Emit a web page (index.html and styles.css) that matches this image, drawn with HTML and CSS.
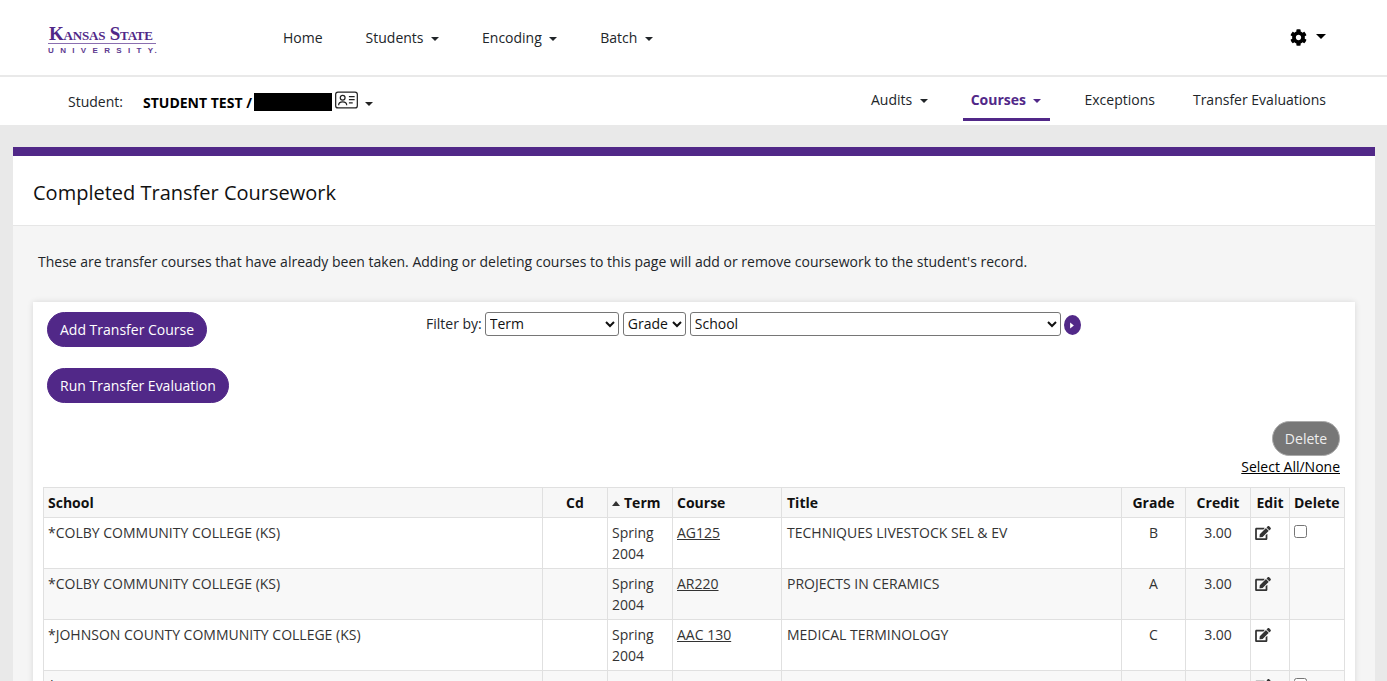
FILE: index.html
```html
<!DOCTYPE html>
<html lang="en">
<head>
<meta charset="utf-8">
<title>Completed Transfer Coursework</title>
<link rel="stylesheet" href="styles.css">
</head>
<body>
<svg class="defs" width="0" height="0" aria-hidden="true">
  <symbol id="edit" viewBox="0 0 576 512"><path d="M402.6 83.2l90.2 90.2c3.8 3.8 3.8 10 0 13.8L274.4 405.6l-92.8 10.3c-12.4 1.4-22.9-9.1-21.5-21.5l10.3-92.8L388.8 83.2c3.8-3.8 10-3.8 13.8 0zm162-22.9l-48.8-48.8c-15.2-15.2-39.9-15.2-55.2 0l-35.4 35.4c-3.8 3.8-3.8 10 0 13.8l90.2 90.2c3.8 3.8 10 3.8 13.8 0l35.4-35.4c15.2-15.3 15.2-40 0-55.2zM384 346.2V448H64V128h229.8c3.2 0 6.2-1.3 8.5-3.5l40-40c7.6-7.6 2.2-20.5-8.5-20.5H48C21.5 64 0 85.5 0 112v352c0 26.5 21.5 48 48 48h352c26.5 0 48-21.5 48-48V306.2c0-10.7-12.9-16-20.5-8.5l-40 40c-2.2 2.3-3.5 5.3-3.5 8.5z"/></symbol>
</svg>
<header class="topbar">
  <div class="logo">
    <div class="logo-name">Kansas State</div>
    <div class="logo-sub">UNIVERSITY<span class="logo-tm">.</span></div>
  </div>
  <nav class="mainnav">
    <a class="navlink">Home</a>
    <a class="navlink caret">Students</a>
    <a class="navlink caret">Encoding</a>
    <a class="navlink caret">Batch</a>
  </nav>
  <div class="settings">
    <svg class="gear" viewBox="0 0 512 512"><path d="M487.4 315.7l-42.6-24.6c4.3-23.2 4.3-47 0-70.2l42.6-24.6c4.9-2.8 7.1-8.6 5.5-14-11.1-35.6-30-67.8-54.7-94.6-3.8-4.1-10-5.1-14.8-2.3L380.8 110c-17.9-15.4-38.5-27.3-60.8-35.1V25.8c0-5.6-3.9-10.5-9.4-11.7-36.7-8.2-74.3-7.8-109.2 0-5.5 1.2-9.4 6.1-9.4 11.7V75c-22.2 7.9-42.8 19.8-60.8 35.1L88.7 85.5c-4.9-2.8-11-1.9-14.8 2.3-24.7 26.7-43.6 58.9-54.7 94.6-1.7 5.4.6 11.2 5.5 14L67.3 221c-4.3 23.2-4.3 47 0 70.2l-42.6 24.6c-4.9 2.8-7.1 8.6-5.5 14 11.1 35.6 30 67.8 54.7 94.6 3.8 4.1 10 5.1 14.8 2.3l42.6-24.6c17.9 15.4 38.5 27.3 60.8 35.1v49.2c0 5.6 3.9 10.5 9.4 11.7 36.7 8.2 74.3 7.8 109.2 0 5.5-1.2 9.4-6.1 9.4-11.7v-49.2c22.2-7.9 42.8-19.8 60.8-35.1l42.6 24.6c4.9 2.8 11 1.9 14.8-2.3 24.7-26.7 43.6-58.9 54.7-94.6 1.5-5.5-.7-11.3-5.6-14.1zM256 336c-44.1 0-80-35.9-80-80s35.9-80 80-80 80 35.9 80 80-35.9 80-80 80z"/></svg>
    <span class="caret-only"></span>
  </div>
</header>
<div class="subbar">
  <div class="student">
    <span class="student-label">Student:</span>
    <strong class="student-name">STUDENT TEST /</strong>
    <span class="redacted"></span>
    <svg class="idcard" viewBox="0 0 24 18"><rect x="0.7" y="0.7" width="22.6" height="16.6" rx="2.4" fill="none" stroke="#222" stroke-width="1.3"/><circle cx="8" cy="6.6" r="2.5" fill="none" stroke="#222" stroke-width="1.3"/><path d="M3.8 14.6c0-4.8 8.4-4.8 8.4 0" fill="none" stroke="#222" stroke-width="1.3"/><path d="M14.5 5.5h6M14.5 8.7h6M14.5 11.9h4" stroke="#222" stroke-width="1.3"/></svg>
    <span class="caret-only small"></span>
  </div>
  <nav class="subnav">
    <a class="subitem caret">Audits</a>
    <a class="subitem caret active">Courses</a>
    <a class="subitem">Exceptions</a>
    <a class="subitem">Transfer Evaluations</a>
  </nav>
</div>
<main class="panel">
  <h1 class="panel-title">Completed Transfer Coursework</h1>
  <div class="panel-body">
    <p class="intro">These are transfer courses that have already been taken. Adding or deleting courses to this page will add or remove coursework to the student's record.</p>
    <section class="sheet">
      <div class="tools">
        <div class="tool-buttons">
          <button class="pill">Add Transfer Course</button>
          <button class="pill">Run Transfer Evaluation</button>
        </div>
        <form class="filter">
          <label class="filter-label">Filter by:</label>
          <select class="sel sel-term"><option>Term</option></select>
          <select class="sel sel-grade"><option>Grade</option></select>
          <select class="sel sel-school"><option>School</option></select>
          <span class="go"><svg viewBox="0 0 8 10" width="6" height="9"><path d="M1.5 1l5 4-5 4z" fill="#fff"/></svg></span>
        </form>
      </div>
      <div class="delete-area">
        <button class="pill pill-off">Delete</button>
        <a class="selectall">Select All/None</a>
      </div>
      <table class="grid">
        <colgroup>
          <col class="c1"><col class="c2"><col class="c3"><col class="c4"><col class="c5"><col class="c6"><col class="c7"><col class="c8"><col class="c9">
        </colgroup>
        <thead>
          <tr><th>School</th><th class="ctr">Cd</th><th><span class="sort"></span>Term</th><th>Course</th><th class="title-cell">Title</th><th class="ctr">Grade</th><th class="ctr">Credit</th><th class="ctr">Edit</th><th>Delete</th></tr>
        </thead>
        <tbody>
          <tr><td>*COLBY COMMUNITY COLLEGE (KS)</td><td></td><td>Spring 2004</td><td><a class="ul">AG125</a></td><td class="title-cell">TECHNIQUES LIVESTOCK SEL &amp; EV</td><td class="ctr">B</td><td class="ctr">3.00</td><td><svg class="edit"><use href="#edit"/></svg></td><td><input class="chk" type="checkbox"></td></tr>
          <tr><td>*COLBY COMMUNITY COLLEGE (KS)</td><td></td><td>Spring 2004</td><td><a class="ul">AR220</a></td><td class="title-cell">PROJECTS IN CERAMICS</td><td class="ctr">A</td><td class="ctr">3.00</td><td><svg class="edit"><use href="#edit"/></svg></td><td></td></tr>
          <tr><td>*JOHNSON COUNTY COMMUNITY COLLEGE (KS)</td><td></td><td>Spring 2004</td><td><a class="ul">AAC 130</a></td><td class="title-cell">MEDICAL TERMINOLOGY</td><td class="ctr">C</td><td class="ctr">3.00</td><td><svg class="edit"><use href="#edit"/></svg></td><td></td></tr>
          <tr><td>*</td><td></td><td>Spring 2004</td><td></td><td class="title-cell"></td><td class="ctr"></td><td class="ctr"></td><td><svg class="edit"><use href="#edit"/></svg></td><td><input class="chk" type="checkbox"></td></tr>
        </tbody>
      </table>
    </section>
  </div>
</main>
</body>
</html>
```

FILE: styles.css
```css
* { box-sizing: border-box; }
html, body { height: 681px; overflow: hidden; }
body {
  margin: 0;
  background: #e9e9e9;
  color: #212529;
  font: 14px/21px "Open Sans", sans-serif;
}
.defs { position: absolute; }
a { color: inherit; }
.topbar {
  height: 77px;
  background: #fff;
  border-bottom: 2px solid #e9e9e9;
  display: flex;
  align-items: center;
  padding: 0 61px 0 48px;
}
.logo { width: 235px; color: #512888; font-family: "Liberation Serif", serif; margin-top: 5px; }
.logo-name {
  font-variant: small-caps;
  font-weight: 700;
  font-size: 19px;
  line-height: 17px;
  letter-spacing: -0.2px;
  border-bottom: 1px solid #8a6fb0;
  width: 108px;
  padding: 0 0 1px 1px;
  white-space: nowrap;
}
.logo-sub {
  font: 700 8px/9px "Liberation Sans", sans-serif;
  letter-spacing: 6.35px;
  white-space: nowrap;
  margin-top: 2px;
  color: #5d3a8f;
}
.logo-tm { letter-spacing: 0; margin-left: -5px; }
.mainnav { display: flex; gap: 43px; flex: 1; margin-top: 0; }
.navlink { color: #212529; }
.caret::after, .caret-only {
  content: "";
  display: inline-block;
  border-top: 4.5px solid currentColor;
  border-left: 4.5px solid transparent;
  border-right: 4.5px solid transparent;
  vertical-align: 2.5px;
}
.caret::after { margin-left: 7.5px; }
.settings { display: flex; align-items: center; gap: 9px; color: #000; }
.settings .caret-only { margin-bottom: 3px; border-top-width: 5px; border-left-width: 5px; border-right-width: 5px; }
.gear { width: 17px; height: 17px; fill: #000; }
.subbar {
  height: 48px;
  background: #fff;
  display: flex;
  justify-content: space-between;
  padding: 0 61px 0 68px;
}
.student { display: flex; align-items: center; color: #000; padding-top: 2px; }
.student-label { width: 75px; color: #212529; margin-bottom: 2px; }
.student-name { font-weight: 700; padding-top: 2px; margin-bottom: 2px; }
.redacted { width: 78px; height: 18px; background: #000; margin-left: 2px; }
.idcard { width: 23px; height: 18px; margin: -5px 0 0 3px; }
.caret-only.small { margin: 3px 0 0 7px; border-top-width: 4px; border-left-width: 4px; border-right-width: 4px; color: #222; }
.subnav { display: flex; gap: 22px; align-items: stretch; }
.subitem {
  padding: 12px 8px 0;
  height: 44px;
  color: #212529;
  border-bottom: 3px solid transparent;
}
.subitem.caret { margin-right: 5px; }
.subitem.active { color: #512888; font-weight: 700; border-bottom-color: #512888; padding-right: 9px; margin-right: 4px; }
.subitem:last-child { padding-right: 0; }
.panel {
  margin: 22px 12px 0 13px;
  background: #f5f5f5;
  border-top: 9px solid #512888;
}
.panel-title {
  margin: 0;
  height: 70px;
  background: #fff;
  border-bottom: 1px solid #e6e6e6;
  padding: 22px 20px 0;
  font-size: 20px;
  line-height: 30px;
  font-weight: 400;
  color: #111;
}
.panel-body { padding: 25px 20px 0; }
.intro { margin: 0 0 30px 5px; line-height: 21px; color: #212529; }
.sheet {
  background: #fff;
  box-shadow: 0 0 6px rgba(0,0,0,.12);
  padding: 10px 10px 0;
}
.tools { display: flex; height: 109px; }
.tool-buttons { display: flex; flex-direction: column; align-items: flex-start; gap: 21px; margin-left: 4px; width: 379px; }
.pill {
  height: 35px;
  border: 1px solid #512888;
  border-radius: 18px;
  background: #512888;
  color: #fff;
  font: 14px/21px "Open Sans", sans-serif;
  padding: 0 12px;
}
.filter { display: flex; align-items: flex-start; gap: 4px; }
.filter-label { color: #212529; line-height: 24px; }
.sel {
  height: 24px;
  font: 14px "Open Sans", sans-serif;
  color: #111;
  background: #fff;
  border: 1px solid #767676;
  border-radius: 3px;
  padding: 0 0 2px;
}
.sel-term { width: 134px; margin-left: -1px; }
.sel-grade { width: 63px; }
.sel-school { width: 371px; }
.go {
  width: 17px; height: 20px; margin: 3px 0 0 -1px;
  background: #512888; border-radius: 50%;
  display: flex; align-items: center; justify-content: center;
}
.delete-area { display: flex; flex-direction: column; align-items: flex-end; padding-right: 5px; }
.pill-off { background: #777; border-color: #aaa; color: #eee; width: 68px; padding: 0; }
.selectall { text-decoration: underline; color: #000; line-height: 21px; }
.grid {
  margin-top: 10px;
  width: 1301px;
  table-layout: fixed;
  border-collapse: collapse;
  color: #333;
}
.c1 { width: 499px; } .c2 { width: 65px; } .c3 { width: 65px; } .c4 { width: 109px; }
.c5 { width: 340px; } .c6 { width: 64px; } .c7 { width: 65px; } .c8 { width: 39px; } .c9 { width: 55px; }
.grid th, .grid td { border: 1px solid #e0e0e0; padding: 4px; vertical-align: top; text-align: left; }
.grid th { background: #f7f7f7; color: #111; font-weight: 700; height: 30px; white-space: nowrap; }
.grid td { height: 51px; }
.grid .title-cell { padding-left: 5px; }
.grid tbody tr:nth-child(even) td { background: #f8f8f8; }
.grid .ctr { text-align: center; }
.ul { text-decoration: underline; }
.sort {
  display: inline-block;
  border-bottom: 5px solid #333;
  border-left: 4px solid transparent;
  border-right: 4px solid transparent;
  vertical-align: 2px;
  margin-right: 4px;
}
.edit { width: 16px; height: 14px; fill: #333; margin-top: 4px; display: block; }
.chk { margin: 3px 0 0; width: 13px; height: 13px; display: block; }
```
